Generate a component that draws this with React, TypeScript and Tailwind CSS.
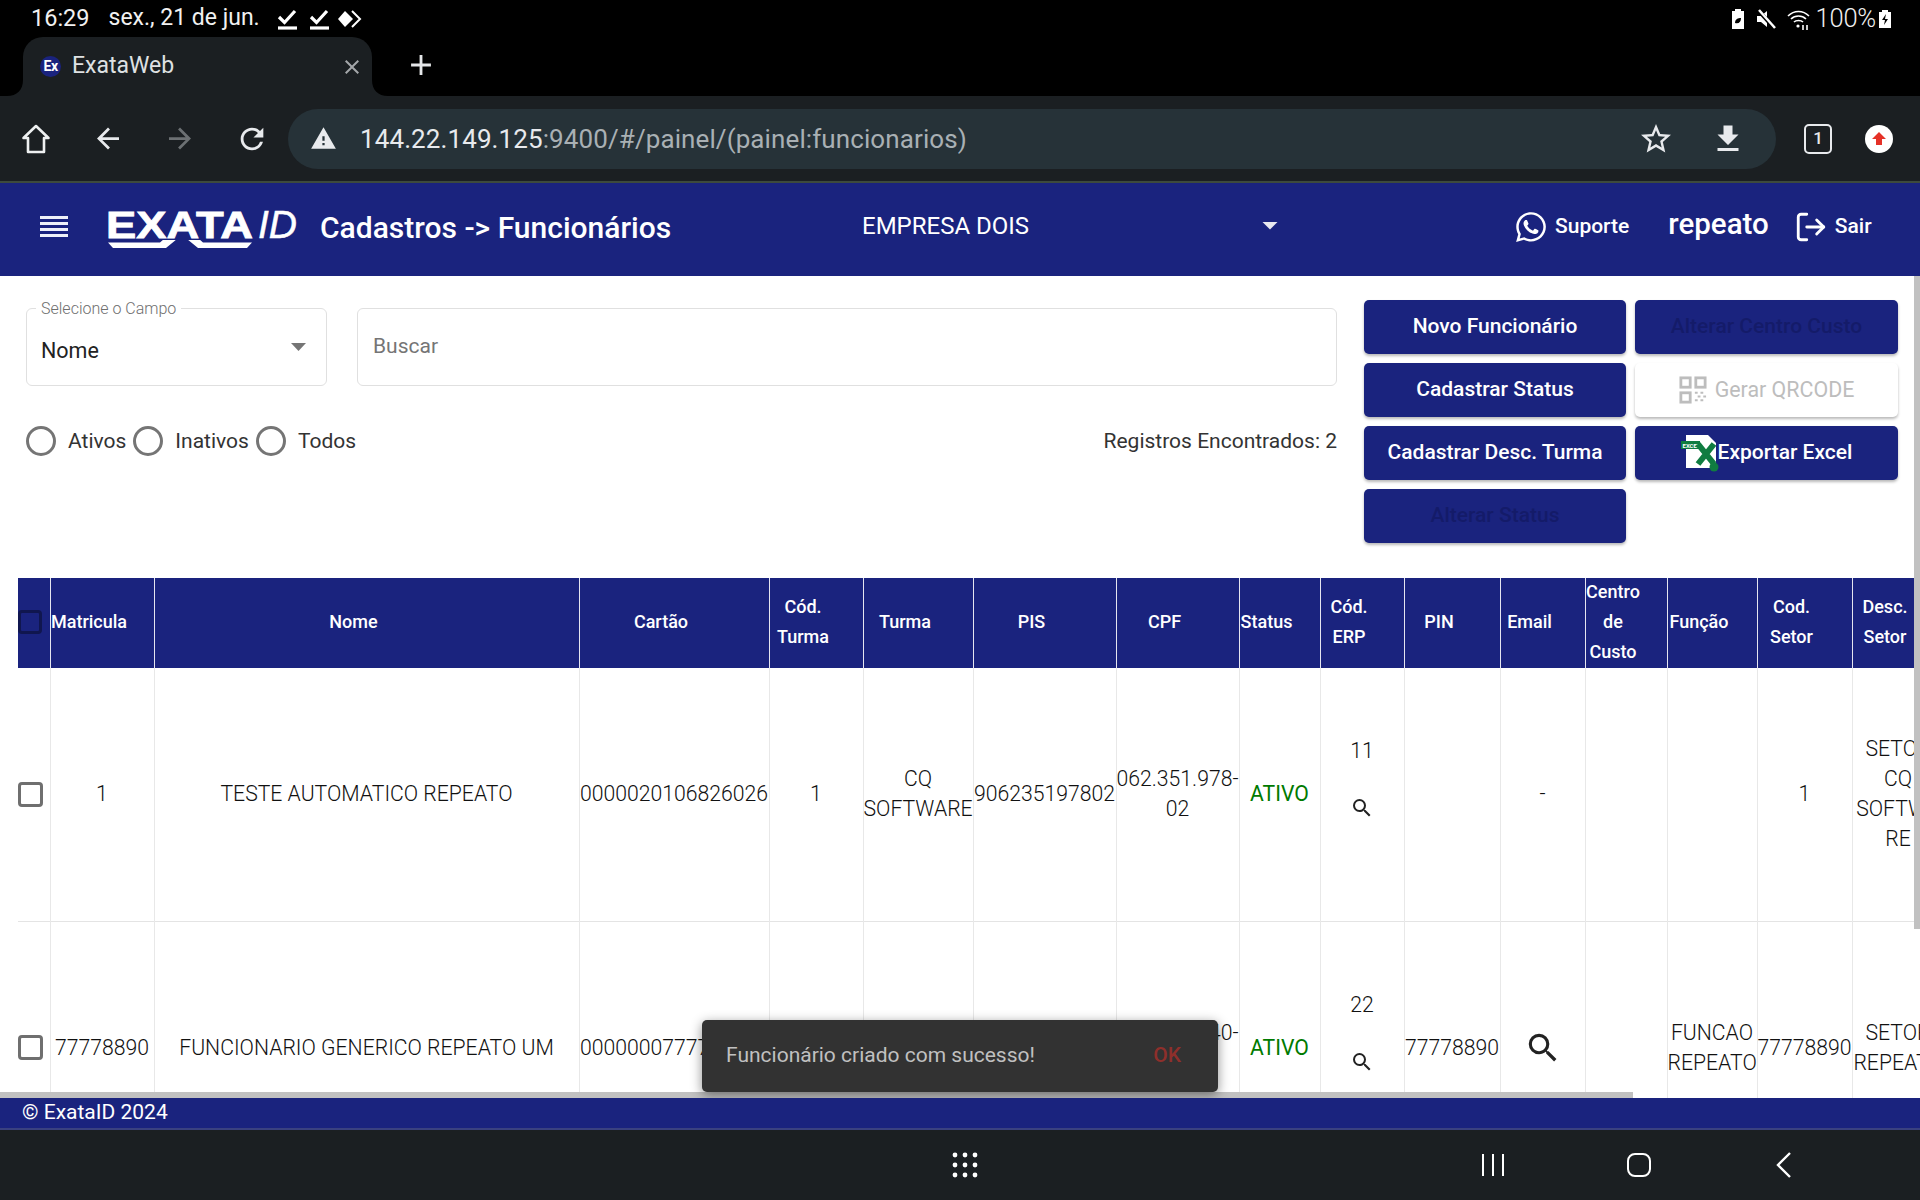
import React from "react";
import { MdArrowBack, MdArrowForward, MdRefresh, MdStarBorder, MdFileDownload, MdSearch, MdClose, MdAdd, MdWarning } from "react-icons/md";
import { FaWhatsapp } from "react-icons/fa";
import { LogOut } from "lucide-react";

const roboto = "font-['Roboto',sans-serif]";

function CheckUnder() {
  return (
    <svg width="23" height="24" viewBox="0 0 23 24" fill="none" stroke="#fff">
      <path d="M3 10l5.5 5.5L19 4" strokeWidth="3.2" />
      <path d="M2 21h19" strokeWidth="3.2" />
    </svg>
  );
}

function StatusBar() {
  return (
    <div className="h-[37px] bg-black flex items-center text-[#f1f1f1] text-[23.5px] font-normal">
      <span className="ml-[31px]">16:29</span>
      <span className="ml-[19px] text-[23px]">sex., 21 de jun.</span>
      <span className="ml-[16px] flex items-center gap-[9px]">
        <CheckUnder />
        <CheckUnder />
        <svg width="25" height="20" viewBox="0 0 25 20" className="-ml-[3px]">
          <path d="M8 2l8 8-8 8-7-8z" fill="#fff" />
          <path d="M15 2l8 8-8 8" fill="none" stroke="#fff" strokeWidth="2" />
        </svg>
      </span>
      <span className="ml-auto flex items-center mr-[28px]">
        <svg width="16" height="22" viewBox="0 0 16 22" className="mr-[9px]">
          <path d="M5 1h6v2h3v18H2V3h3z" fill="#fff" />
          <path d="M5 15c0-4 3-5 6-5 0 4-2 6-6 5z" fill="#000" />
        </svg>
        <svg width="22" height="22" viewBox="0 0 22 22" className="mr-[9px]">
          <path d="M2 8h4l6-5v16l-6-5H2z" fill="#fff" />
          <path d="M3 2l17 19" stroke="#000" strokeWidth="4" />
          <path d="M4 2l16 18" stroke="#fff" strokeWidth="2.5" />
        </svg>
        <svg width="26" height="24" viewBox="0 0 26 24" fill="none" stroke="#fff" strokeWidth="1.6" className="mr-[4px]">
          <path d="M2 9c6-6 15-6 21 0" />
          <path d="M5 12c4-4 11-4 15 0" />
          <path d="M8 15c2-2 7-2 9 0" />
          <path d="M17 18v5M21 23v-5" />
          <circle cx="12" cy="19" r="1.6" fill="#fff" stroke="none" />
        </svg>
        <span className="text-[25.5px] font-light tracking-[-0.2px]">100%</span>
        <svg width="14" height="22" viewBox="0 0 14 20" className="ml-[2px]">
          <path d="M4 1h6v2h3v16H1V3h3z" fill="#fff" />
          <path d="M8 5l-4 6h3l-1 5 4-6H7z" fill="#000" />
        </svg>
      </span>
    </div>
  );
}

function TabStrip() {
  return (
    <div className="h-[59px] bg-black flex items-end">
      <div className="relative ml-[23px] w-[349px] h-[59px] bg-[#1b1f22] rounded-t-[20px] flex items-center">
        <svg width="16" height="16" viewBox="0 0 16 16" className="absolute -left-[16px] bottom-0">
          <path d="M16 0v16H0C10 16 16 10 16 0z" fill="#1b1f22" />
        </svg>
        <svg width="16" height="16" viewBox="0 0 16 16" className="absolute -right-[16px] bottom-0">
          <path d="M0 0v16h16C6 16 0 10 0 0z" fill="#1b1f22" />
        </svg>
        <span className="ml-[17px] w-[21px] h-[21px] rounded-full bg-[#1a237e] flex items-center justify-center text-white text-[14px] font-bold tracking-[-0.5px]">Ex</span>
        <span className="ml-[11px] text-[23px] text-[#dfe1e3]">ExataWeb</span>
        <MdClose className="ml-auto mr-[8px] text-[#a4a7aa]" size={24} />
      </div>
      <MdAdd className="ml-[32px] mb-[14px] text-[#e4e6e8]" size={34} />
    </div>
  );
}

function Toolbar() {
  return (
    <div className="h-[85px] bg-[#1b1f22] flex items-center border-b-2 border-[#3d4a3d] box-content">
      <span className="w-[72px] flex justify-center">
        <svg width="30" height="32" viewBox="0 0 30 32" fill="none" stroke="#eef0f1" strokeWidth="2.6" strokeLinejoin="round">
          <path d="M15 3L2.5 15H7v14h16V15h4.5z" />
        </svg>
      </span>
      <MdArrowBack className="w-[72px] text-[#e8eaed]" size={33} />
      <MdArrowForward className="w-[72px] text-[#6c7073]" size={33} />
      <MdRefresh className="w-[72px] text-[#e8eaed]" size={34} />
      <div className="w-[1488px] h-[60px] rounded-full bg-[#263238] flex items-center">
        <MdWarning className="ml-[22px] text-[#e8eaed]" size={27} />
        <span className="ml-[23px] mt-[2px] text-[26px] text-[#e8eaed] tracking-[0.1px]">
          144.22.149.125<span className="text-[#a9b0b4]">:9400/#/painel/(painel:funcionarios)</span>
        </span>
        <MdStarBorder className="ml-auto mr-[-1px] text-[#e8eaed]" size={36} />
        <MdFileDownload className="ml-[37px] mr-[30px] text-[#e8eaed]" size={36} />
      </div>
      <span className="ml-[28px] w-[28px] h-[30px] rounded-[5px] border-[2.5px] border-[#e8eaed] text-[#e8eaed] text-[17px] font-medium flex items-center justify-center">1</span>
      <span className="ml-[33px] w-[28px] h-[28px] rounded-full bg-white flex items-center justify-center">
        <svg width="16" height="16" viewBox="0 0 16 16"><path d="M8 1l7 7h-4v6H5V8H1z" fill="#e53127" /></svg>
      </span>
    </div>
  );
}

function Logo() {
  return (
    <div className="relative ml-[38px] w-[190px] h-[44px] shrink-0 self-start mt-[25px]">
      <span className="absolute left-0 top-0 font-['Liberation_Sans',sans-serif] font-bold text-[36px] leading-[36px] text-white origin-left scale-x-[1.26] [-webkit-text-stroke:0.8px_white]">EXATA</span>
      <span className="absolute left-[152px] top-[-3px] font-['Liberation_Sans',sans-serif] italic text-[39px] leading-[39px] text-white [-webkit-text-stroke:0.5px_white]">ID</span>
      <svg width="148" height="9" viewBox="0 0 148 9" className="absolute left-0 top-[32px]">
        <path d="M2 2.5H54L58-1H71L60 8H7Z" fill="#fff" />
        <path d="M81-1H93L97 2.5H146L141 8H92Z" fill="#fff" />
      </svg>
    </div>
  );
}

function Header() {
  return (
    <div className="h-[93px] bg-[#1a237e] flex items-center text-white shrink-0 pb-[5px]">
      <svg width="28" height="24" viewBox="0 0 28 24" className="ml-[40px]" fill="#eef0f8">
        <rect y="1" width="28" height="3" />
        <rect y="7" width="28" height="3" />
        <rect y="13" width="28" height="3" />
        <rect y="19" width="28" height="3" />
      </svg>
      <Logo />
      <span className="ml-[24px] text-[30px] font-medium w-[542px] shrink-0">Cadastros -&gt; Funcionários</span>
      <span className="text-[24px] w-[400px] shrink-0 -mt-[3px]">EMPRESA DOIS</span>
      <span className="w-[16px] h-[8px] -mt-[3px] bg-[#e8e8f0] [clip-path:polygon(0_0,100%_0,50%_100%)] shrink-0" />
      <FaWhatsapp size={34} className="ml-[236px] shrink-0" />
      <span className="ml-[7px] text-[21px] font-medium">Suporte</span>
      <span className="ml-[39px] text-[29.5px] font-medium -mt-[5px]">repeato</span>
      <LogOut size={34} strokeWidth={2} className="ml-[25px] shrink-0 -scale-x-100 rotate-180" />
      <span className="ml-[7px] text-[21px] font-medium">Sair</span>
    </div>
  );
}

function Btn({ children, muted, light }: { children: React.ReactNode; muted?: boolean; light?: boolean }) {
  return (
    <div
      className={
        "h-[54px] rounded-[5px] flex items-center justify-center font-medium shadow-[0_2px_3px_rgba(0,0,0,0.28)] " +
        (light ? "bg-white text-[#bdbdbd] font-normal text-[21.4px]" : muted ? "bg-[#1a237e] text-[#141b69] text-[21px]" : "bg-[#1a237e] text-white text-[21px]")
      }
    >
      {children}
    </div>
  );
}

function QrIcon() {
  return (
    <svg width="28" height="28" viewBox="0 0 30 30" className="mr-[8px] shrink-0" fill="none" stroke="#bdbdbd" strokeWidth="3">
      <rect x="2" y="2" width="10" height="10" />
      <rect x="18" y="2" width="10" height="10" />
      <rect x="2" y="18" width="10" height="10" />
      <path d="M17 18h3M23 18h3M20 22h3M26 22h3M17 26h3M23 26h3" strokeWidth="2" />
    </svg>
  );
}

function ExcelIcon() {
  return (
    <svg width="38" height="38" viewBox="0 0 38 38" className="shrink-0">
      <path d="M5 1h22l8 8v25H5z" fill="#fff" />
      <rect x="0" y="7" width="19" height="8" fill="#107c41" />
      <text x="1.5" y="13.5" fontSize="6" fontWeight="700" fill="#fff" fontFamily="Roboto, sans-serif">EXCEL</text>
      <path d="M17 10l16 20M33 10L17 30" stroke="#107c41" strokeWidth="6" fill="none" />
      <circle cx="33" cy="33" r="4.5" fill="#107c41" />
    </svg>
  );
}

function Radio({ label, gap }: { label: string; gap: string }) {
  return (
    <div className={"flex items-center " + gap}>
      <span className="w-[30px] h-[30px] rounded-full border-[3px] border-[#757575] bg-white" />
      <span className="text-[21px] text-[#333] mt-[2px]">{label}</span>
    </div>
  );
}

function Filters() {
  return (
    <div className="flex h-[302px] shrink-0 pt-[24px]">
      <div className="ml-[26px] w-[1311px] shrink-0">
        <div className="flex gap-[30px] mt-[8px]">
          <div className="relative w-[301px] h-[78px] rounded-[6px] border border-[#e0e0e0] shrink-0 flex items-center">
            <span className="absolute -top-[9px] left-[9px] bg-white px-[5px] text-[16px] leading-[18px] text-[#6f6f6f] font-light">Selecione o Campo</span>
            <span className="ml-[14px] mt-[9px] text-[21.5px] text-[#222]">Nome</span>
            <span className="absolute right-[20px] top-[34px] w-[15px] h-[8px] bg-[#757575] [clip-path:polygon(0_0,100%_0,50%_100%)]" />
          </div>
          <div className="flex-1 h-[78px] rounded-[6px] border border-[#e0e0e0] flex items-center">
            <span className="ml-[15px] -mt-[1px] text-[21px] text-[#757575]">Buscar</span>
          </div>
        </div>
        <div className="flex items-center mt-[40px] h-[30px]">
          <Radio label="Ativos" gap="gap-[12px]" />
          <div className="ml-[7px]"><Radio label="Inativos" gap="gap-[12px]" /></div>
          <div className="ml-[7px]"><Radio label="Todos" gap="gap-[12px]" /></div>
          <span className="ml-auto mt-[2px] text-[21px] text-[#333]">Registros Encontrados: 2</span>
        </div>
      </div>
      <div className="ml-[27px] w-[534px] grid grid-cols-[262px_263px] gap-x-[9px] gap-y-[9px] content-start shrink-0">
        <Btn>Novo Funcionário</Btn>
        <Btn muted>Alterar Centro Custo</Btn>
        <Btn>Cadastrar Status</Btn>
        <Btn light>
          <QrIcon />
          Gerar QRCODE
        </Btn>
        <Btn>Cadastrar Desc. Turma</Btn>
        <Btn>
          <ExcelIcon />
          <span className="ml-[-1px]">Exportar Excel</span>
        </Btn>
        <Btn muted>Alterar Status</Btn>
      </div>
    </div>
  );
}

const widths = [32, 104, 425, 190, 94, 110, 143, 123, 81, 84, 96, 85, 82, 90, 95, 92];

const headers: React.ReactNode[] = [
  <span className="block w-[24px] h-[24px] rounded-[4px] border-[3px] border-[#10164f]" />,
  "Matricula", "Nome", "Cartão",
  <>Cód.<br />Turma</>, "Turma", "PIS", "CPF", "Status",
  <>Cód.<br />ERP</>, "PIN", "Email",
  <>Centro<br />de<br />Custo</>, "Função",
  <>Cod.<br />Setor</>, <>Desc.<br />Setor</>,
];

function Cb() {
  return <span className="block w-[25px] h-[25px] rounded-[4px] border-[3px] border-[#6f6f6f] bg-white" />;
}

function Erp({ v }: { v: string }) {
  return (
    <div className="flex flex-col items-center pb-[32px]">
      <span>{v}</span>
      <MdSearch size={24} className="mt-[30px] text-[#222]" />
    </div>
  );
}

const rows: React.ReactNode[][] = [
  [<Cb />, "1", "TESTE AUTOMATICO REPEATO", "0000020106826026", "1", "CQ SOFTWARE", "906235197802", "062.351.978-02",
    <span className="text-[#007a00] font-normal">ATIVO</span>, <Erp v="11" />, "", "-", "", "", "1", "SETOR CQ SOFTWARE"],
  [<Cb />, "77778890", "FUNCIONARIO GENERICO REPEATO UM", "0000000777788890", "1", "CQ SOFTWARE", "906235197803", "123.456.740-00",
    <span className="text-[#007a00] font-normal">ATIVO</span>, <Erp v="22" />, "77778890", <MdSearch size={38} className="mx-auto text-[#222]" />, "", "FUNCAO REPEATO", "77778890", "SETOR REPEATO"],
];

function DataTable() {
  return (
    <div className="relative flex-1 min-h-0 overflow-hidden pl-[18px]">
      <table className="table-fixed border-collapse w-[1926px] text-[21.2px] leading-[30px] text-[#111] font-light">
        <colgroup>
          {widths.map((w, i) => (
            <col key={i} style={{ width: w }} />
          ))}
        </colgroup>
        <thead>
          <tr className="h-[90px] bg-[#1a237e] text-white text-[18px] font-medium">
            {headers.map((h, i) => (
              <th key={i} className={"font-medium p-0 border-x border-[#e5e5f0] first:border-l-0 " + (i === 0 ? "" : "pr-[26px] text-center leading-[30px] whitespace-nowrap")}>
                <div className="-translate-y-[1px]">{h}</div>
              </th>
            ))}
          </tr>
        </thead>
        <tbody>
          {rows.map((r, i) => (
            <tr key={i} className="h-[253px] border-b border-[#e4e4e4]">
              {r.map((c, j) => (
                <td key={j} className={"border-x border-[#e8e8e8] first:border-l-0 text-center align-middle p-0 " + (j === 15 ? "break-words" : "")}>
                  {c}
                </td>
              ))}
            </tr>
          ))}
        </tbody>
      </table>
      <div className="absolute left-0 bottom-0 w-[1633px] h-[6px] bg-[#c1c1c1]" />
      <div className="absolute left-[702px] bottom-[6px] w-[516px] h-[72px] rounded-[5px] bg-[#323232] flex items-center shadow-[0_3px_12px_rgba(0,0,0,0.45)]">
        <span className="ml-[24px] text-[21px] text-[#c0c0c0]">Funcionário criado com sucesso!</span>
        <span className="ml-auto mr-[37px] text-[21px] font-medium text-[#8e2f2b]">OK</span>
      </div>
    </div>
  );
}

function Footer() {
  return (
    <div className="h-[32px] bg-[#1a237e] border-b-2 border-[#3a4180] text-white text-[21px] leading-[28px] pl-[22px] shrink-0">
      © ExataID 2024
    </div>
  );
}

function NavBar() {
  return (
    <div className="h-[70px] bg-[#1b1f22] flex items-center shrink-0">
      <svg width="26" height="26" viewBox="0 0 26 26" fill="#fff" className="ml-[952px]">
        {[3, 13, 23].flatMap((y) => [3, 13, 23].map((x) => <circle key={x + "-" + y} cx={x} cy={y} r="2.4" />))}
      </svg>
      <svg width="24" height="24" viewBox="0 0 24 24" stroke="#fff" strokeWidth="2" className="ml-[503px]">
        <path d="M2 1v22M12 1v22M22 1v22" />
      </svg>
      <span className="ml-[122px] w-[24px] h-[24px] rounded-[8px] border-2 border-white" />
      <svg width="16" height="26" viewBox="0 0 16 26" fill="none" stroke="#fff" strokeWidth="2.4" className="ml-[125px]">
        <path d="M14 1L2 13l12 12" />
      </svg>
    </div>
  );
}

export default function App() {
  return (
    <div className={"w-[1920px] h-[1200px] overflow-hidden flex flex-col bg-white " + roboto}>
      <StatusBar />
      <TabStrip />
      <Toolbar />
      <Header />
      <div className="relative flex-1 min-h-0 flex flex-col">
        <Filters />
        <DataTable />
        <div className="absolute right-0 top-0 w-[6px] h-[653px] bg-[#c1c1c1]" />
      </div>
      <Footer />
      <NavBar />
    </div>
  );
}
